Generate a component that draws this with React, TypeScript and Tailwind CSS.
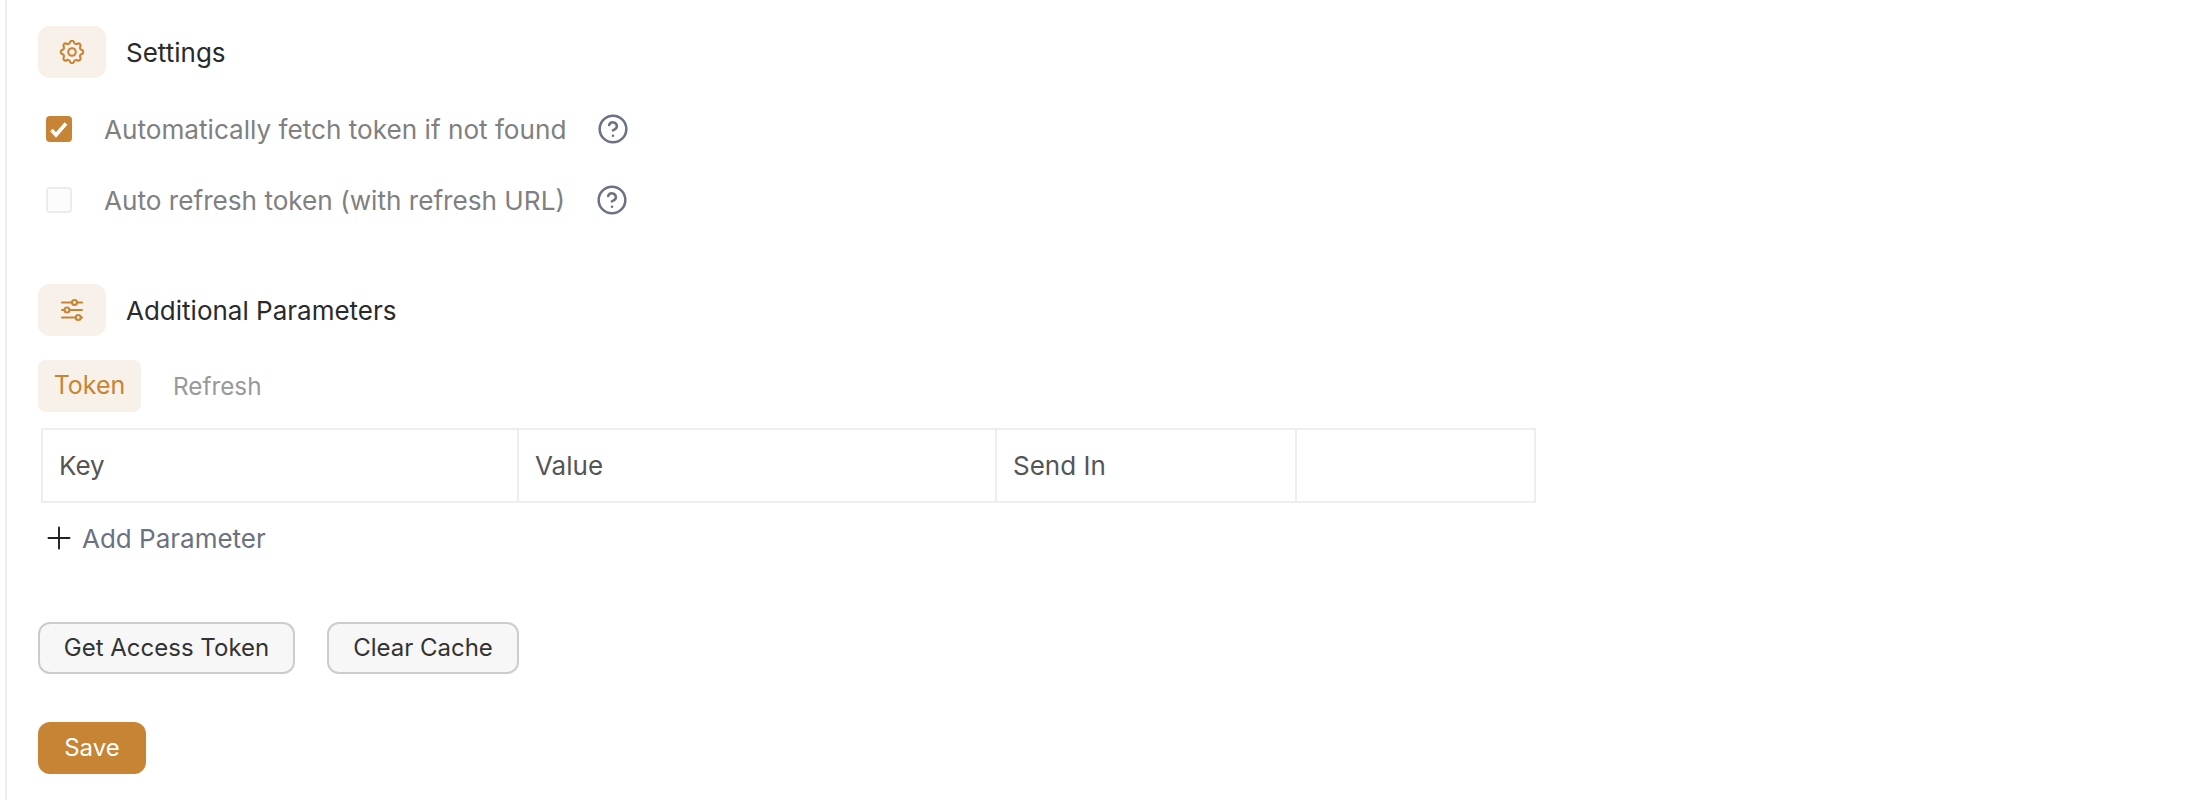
import React from 'react';
import { CircleHelp } from 'lucide-react';
import { TbAdjustmentsHorizontal, TbPlus, TbSettings } from 'react-icons/tb';

function SectionTitle({ icon, title }: { icon: React.ReactNode; title: string }) {
  return (
    <div className="flex items-center gap-[20px]">
      <div className="flex h-[52px] w-[68px] items-center justify-center rounded-xl bg-[#f8f1ea] text-[#c68434]">
        {icon}
      </div>
      <span className="pt-px text-[26px] leading-8 text-[#2a2a2a]">{title}</span>
    </div>
  );
}

function CheckRow({ checked, label }: { checked: boolean; label: string }) {
  return (
    <div className="flex h-[26px] items-center pl-2">
      {checked ? (
        <span className="flex h-[26px] w-[26px] items-center justify-center rounded bg-[#c68434]">
          <svg viewBox="0 0 26 26" className="h-[26px] w-[26px]" fill="none">
            <path d="M5.5 14l4.5 5L20 7.5" stroke="#ffffff" strokeWidth="3.6" />
          </svg>
        </span>
      ) : (
        <span className="h-[26px] w-[26px] rounded border-2 border-[#ebebeb] bg-[#fcfcfc]" />
      )}
      <span className="ml-[32px] pt-px text-[26.15px] leading-8 text-[#808080]">{label}</span>
      <CircleHelp className="ml-[31px] text-[#6b7280]" size={32} strokeWidth={1.9} />
    </div>
  );
}

export default function App() {
  return (
    <div className="min-h-screen bg-white pl-[5px] font-['Inter',sans-serif]">
      <div className="flex min-h-screen flex-col border-l-2 border-[#eeeeee] pl-[31px] pt-[26px]">
        <SectionTitle icon={<TbSettings size={30} strokeWidth={1.7} />} title="Settings" />

        <div className="mt-[38px] flex flex-col gap-[45px]">
          <CheckRow checked label="Automatically fetch token if not found" />
          <CheckRow checked={false} label="Auto refresh token (with refresh URL)" />
        </div>

        <div className="mt-[71px]">
          <SectionTitle icon={<TbAdjustmentsHorizontal size={30} strokeWidth={1.7} />} title="Additional Parameters" />
        </div>

        <div className="mt-6 flex items-center gap-[16px]">
          <button className="h-[52px] w-[103px] rounded-lg bg-[#f8f1ea] text-[25px] text-[#c68434]">Token</button>
          <button className="h-[52px] px-4 text-[24.3px] text-[#999999]">Refresh</button>
        </div>

        <div className="ml-[3px] mt-4 grid h-[75px] w-[1495px] grid-cols-[476px_478px_300px_1fr] border-2 border-[#eeeeee] text-[26px] text-[#555555]">
          <div className="flex items-center border-r-2 border-[#eeeeee] pl-4">Key</div>
          <div className="flex items-center border-r-2 border-[#eeeeee] pl-4">Value</div>
          <div className="flex items-center border-r-2 border-[#eeeeee] pl-4">Send In</div>
          <div />
        </div>

        <button className="ml-[3px] mt-[19px] flex h-8 items-center gap-[5px] self-start">
          <TbPlus className="text-[#222222]" size={36} strokeWidth={1.3} />
          <span className="pt-px text-[26px] text-[#6b7280]">Add Parameter</span>
        </button>

        <div className="mt-[68px] flex gap-8">
          <button className="h-[52px] w-[257px] rounded-xl border-2 border-[#cccccc] bg-[#f7f7f7] text-[24px] text-[#333333]">
            Get Access Token
          </button>
          <button className="h-[52px] w-[192px] rounded-xl border-2 border-[#cccccc] bg-[#f7f7f7] text-[24px] text-[#333333]">
            Clear Cache
          </button>
        </div>

        <button className="mt-12 h-[52px] w-[108px] rounded-xl bg-[#c68434] text-[24px] text-white">Save</button>
      </div>
    </div>
  );
}
